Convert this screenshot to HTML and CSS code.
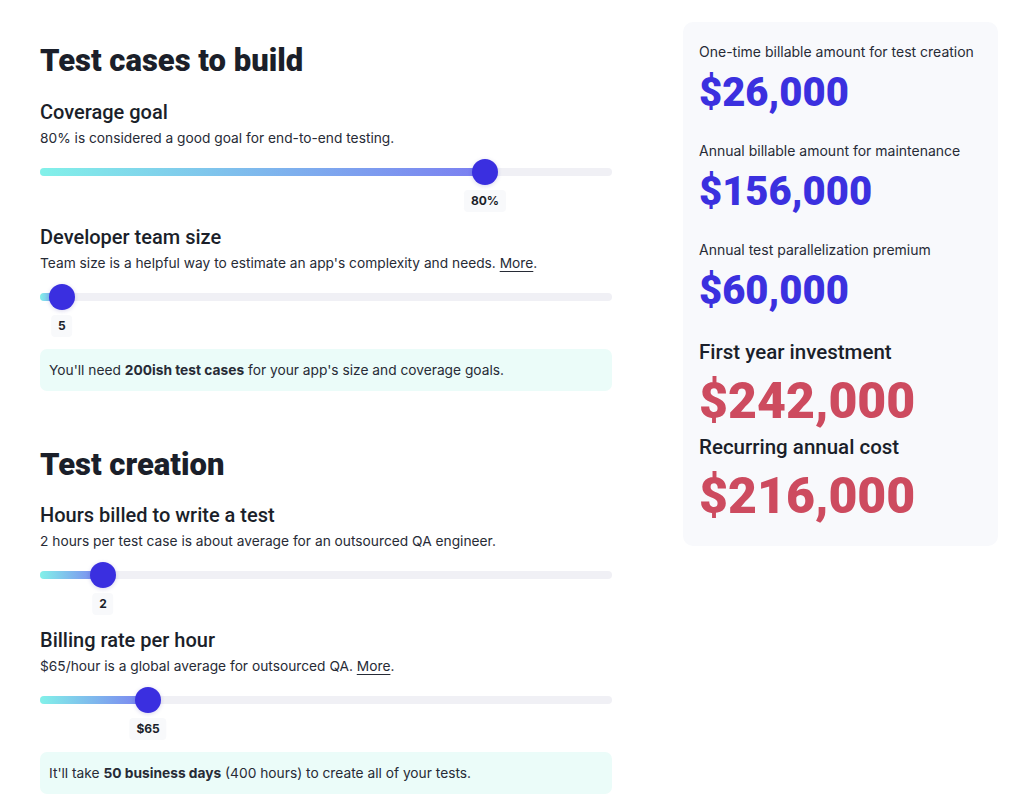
FILE: index.html
```html
<!DOCTYPE html>
<html lang="en">
<head>
<meta charset="utf-8">
<title>Test cost calculator</title>
<link rel="stylesheet" href="styles.css">
</head>
<body>
<div class="page">
  <main class="inputs">
    <h1 class="section-title">Test cases to build</h1>

    <div class="field">
      <h2 class="field-title">Coverage goal</h2>
      <p class="field-desc">80% is considered a good goal for end-to-end testing.</p>
      <div class="slider">
        <div class="track">
          <div class="fill" style="width: 77.8%"></div>
          <div class="thumb" style="left: 77.8%"></div>
        </div>
        <div class="value-row"><span class="value" style="left: 77.8%">80%</span></div>
      </div>
    </div>

    <div class="field">
      <h2 class="field-title">Developer team size</h2>
      <p class="field-desc">Team size is a helpful way to estimate an app's complexity and needs. <a href="#">More</a>.</p>
      <div class="slider">
        <div class="track">
          <div class="fill" style="width: 3.8%"></div>
          <div class="thumb" style="left: 3.8%"></div>
        </div>
        <div class="value-row"><span class="value" style="left: 3.8%">5</span></div>
      </div>
    </div>

    <div class="note">You'll need <b>200ish test cases</b> for your app's size and coverage goals.</div>

    <h1 class="section-title second">Test creation</h1>

    <div class="field">
      <h2 class="field-title">Hours billed to write a test</h2>
      <p class="field-desc">2 hours per test case is about average for an outsourced QA engineer.</p>
      <div class="slider">
        <div class="track">
          <div class="fill" style="width: 11%"></div>
          <div class="thumb" style="left: 11%"></div>
        </div>
        <div class="value-row"><span class="value" style="left: 11%">2</span></div>
      </div>
    </div>

    <div class="field">
      <h2 class="field-title">Billing rate per hour</h2>
      <p class="field-desc">$65/hour is a global average for outsourced QA. <a href="#">More</a>.</p>
      <div class="slider">
        <div class="track">
          <div class="fill" style="width: 18.9%"></div>
          <div class="thumb" style="left: 18.9%"></div>
        </div>
        <div class="value-row"><span class="value" style="left: 18.9%">$65</span></div>
      </div>
    </div>

    <div class="note">It'll take <b>50 business days</b> (400 hours) to create all of your tests.</div>
  </main>

  <aside class="summary">
    <div class="stat">
      <p class="stat-label">One-time billable amount for test creation</p>
      <p class="stat-value">$26,000</p>
    </div>
    <div class="stat">
      <p class="stat-label">Annual billable amount for maintenance</p>
      <p class="stat-value">$156,000</p>
    </div>
    <div class="stat">
      <p class="stat-label">Annual test parallelization premium</p>
      <p class="stat-value">$60,000</p>
    </div>
    <div class="total">
      <p class="total-label">First year investment</p>
      <p class="total-value">$242,000</p>
    </div>
    <div class="total">
      <p class="total-label">Recurring annual cost</p>
      <p class="total-value">$216,000</p>
    </div>
  </aside>
</div>
</body>
</html>
```

FILE: styles.css
```css
* { box-sizing: border-box; }

body {
  margin: 0;
  background: #ffffff;
  color: #1b1f2a;
  font-family: "Inter", "Liberation Sans", sans-serif;
}

.page {
  display: flex;
  align-items: flex-start;
  gap: 71px;
  padding: 22px 26px 0 40px;
}

.inputs {
  width: 572px;
  flex: none;
  padding-top: 20px;
}

.section-title {
  margin: 0 0 19px;
  font-family: "Roboto", "Liberation Sans", sans-serif;
  font-weight: 900;
  font-size: 31px;
  line-height: 38px;
  color: #1b1f2a;
}

.section-title.second {
  margin-top: 55px;
  margin-bottom: 18px;
}

.field {
  margin-bottom: 11px;
}

.field-title {
  margin: 0;
  font-family: "Roboto", "Liberation Sans", sans-serif;
  font-weight: 500;
  font-size: 20px;
  line-height: 26px;
  color: #1b1f2a;
}

.field-desc {
  margin: 3px 0 0;
  font-size: 13.75px;
  line-height: 20px;
  color: #272b36;
}

.field-desc a {
  color: #272b36;
  text-decoration: underline;
  text-underline-offset: 3px;
}

.slider {
  padding-top: 20px;
}

.track {
  position: relative;
  height: 8px;
  border-radius: 4px;
  background: #f0f0f5;
}

.fill {
  height: 8px;
  border-radius: 4px;
  background: linear-gradient(90deg, #82f1e9 0%, #7b7ef1 100%);
}

.thumb {
  position: absolute;
  top: 50%;
  width: 26px;
  height: 26px;
  margin: -13px 0 0 -13px;
  border-radius: 50%;
  background: #3a2fe0;
  box-shadow: 0 1px 4px rgba(40, 30, 160, 0.18);
}

.value-row {
  position: relative;
  height: 37px;
}

.value {
  position: absolute;
  top: 14px;
  transform: translateX(-50%);
  padding: 3px 7px;
  border-radius: 4px;
  background: #f8f9fb;
  font-size: 12px;
  font-weight: 700;
  line-height: 16px;
  color: #1b1f2a;
}

.note {
  margin-top: 10px;
  padding: 11px 9px;
  border-radius: 7px;
  background: #ebfcf9;
  font-size: 13.75px;
  line-height: 20px;
  color: #272b36;
}

.note b {
  font-weight: 700;
}

.summary {
  width: 315px;
  flex: none;
  padding: 20px 16px 17px;
  border-radius: 10px;
  background: #f8f9fc;
}

.stat-label {
  margin: 0;
  font-size: 14px;
  line-height: 20px;
  color: #272b36;
}

.stat-value {
  margin: 7px 0 24px;
  font-family: "Roboto", "Liberation Sans", sans-serif;
  font-weight: 900;
  font-size: 40px;
  line-height: 48px;
  color: #3b30df;
}

.total-label {
  margin: 0;
  font-family: "Roboto", "Liberation Sans", sans-serif;
  font-weight: 500;
  font-size: 20.5px;
  line-height: 26px;
  color: #1b1f2a;
}

.total-value {
  margin: 6px 0 3px;
  font-family: "Roboto", "Liberation Sans", sans-serif;
  font-weight: 900;
  font-size: 50px;
  line-height: 60px;
  color: #cd4b5f;
}
```
